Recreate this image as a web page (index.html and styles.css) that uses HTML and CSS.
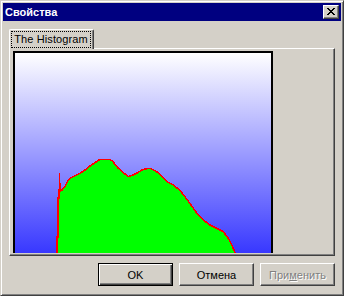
FILE: index.html
```html
<!DOCTYPE html>
<html>
<head>
<meta charset="utf-8">
<link rel="stylesheet" href="styles.css">
</head>
<body>
<div class="window">
  <div class="titlebar">
    <span class="title">Свойства</span>
    <button class="close" aria-label="Закрыть">
      <svg width="8" height="7" viewBox="0 0 8 7" shape-rendering="crispEdges">
        <path d="M0 0h2v1H0zM6 0h2v1H6zM1 1h2v1H1zM5 1h2v1H5zM2 2h4v1H2zM3 3h2v1H3zM2 4h4v1H2zM1 5h2v1H1zM5 5h2v1H5zM0 6h2v1H0zM6 6h2v1H6z" fill="#000"/>
      </svg>
    </button>
  </div>
  <div class="content">
    <div class="tabs">
      <div class="tab"><span class="focus">The Histogram</span></div>
    </div>
    <div class="panel">
      <div class="histo">
        <svg class="chart" width="256" height="200" viewBox="15 53 256 200" shape-rendering="crispEdges">
          <polygon fill="#00ff00" points="57,253 57,237 58,237 58,198 59,198 59,190 62,190 65,186.7 68.3,180 71.7,177.3 76.7,175 80,173.3 85,170 90,166 95,162.7 100,159.3 110,159.3 113,161.7 118.3,168.3 123.3,172.7 128.3,176.7 133.3,175 138.3,172.3 143.3,169.3 150,168.3 156.7,171.7 161.7,176 166.7,181.7 173.3,185 180,190.5 186.7,199 193.3,208.3 198.3,215 203.3,220 210,225 216.7,228.3 223.3,231.7 228.3,238.3 231.7,245 235,252.3 236,253"/>
          <polyline fill="none" stroke="#ff0000" stroke-width="1.5" points="57,253 57,237 58,237 58,198 59,198 59,190 62,190 65,186.7 68.3,180 71.7,177.3 76.7,175 80,173.3 85,170 90,166 95,162.7 100,159.3 110,159.3 113,161.7 118.3,168.3 123.3,172.7 128.3,176.7 133.3,175 138.3,172.3 143.3,169.3 150,168.3 156.7,171.7 161.7,176 166.7,181.7 173.3,185 180,190.5 186.7,199 193.3,208.3 198.3,215 203.3,220 210,225 216.7,228.3 223.3,231.7 228.3,238.3 231.7,245 235,252.3 236,253"/>
          <rect x="59" y="173" width="1" height="26" fill="#ff0000"/>
          <rect x="60" y="183" width="1" height="9" fill="#ff0000"/>
        </svg>
      </div>
    </div>
    <div class="buttons">
      <button class="btn default">OK</button>
      <button class="btn">Отмена</button>
      <button class="btn disabled">При<u>м</u>енить</button>
    </div>
  </div>
</div>
</body>
</html>
```

FILE: styles.css
```css
html, body {
  margin: 0;
  padding: 0;
  background: #d4d0c8;
}

body {
  font-family: "Liberation Sans", Arial, sans-serif;
  font-size: 11px;
  color: #000;
}

.window {
  width: 344px;
  height: 296px;
  box-sizing: border-box;
  border: 1px solid;
  border-color: #d4d0c8 #404040 #404040 #d4d0c8;
  box-shadow: inset 1px 1px #ffffff, inset -1px -1px #808080;
  padding: 2px;
  background: #d4d0c8;
  display: flex;
  flex-direction: column;
}

.titlebar {
  height: 18px;
  background: #000080;
  display: flex;
  align-items: center;
  justify-content: space-between;
  padding: 0 2px 0 2px;
}

.title {
  color: #fff;
  font-weight: bold;
  font-size: 11px;
  line-height: 18px;
}

.close {
  width: 16px;
  height: 14px;
  box-sizing: border-box;
  padding: 0 0 0 3px;
  margin: 0;
  background: #d4d0c8;
  border: 1px solid;
  border-color: #ffffff #404040 #404040 #ffffff;
  box-shadow: inset -1px -1px #808080;
  display: flex;
  align-items: center;
  justify-content: flex-start;
}

.close svg {
  display: block;
  margin-top: -1px;
}

.content {
  padding: 8px 6px 0 6px;
  display: flex;
  flex-direction: column;
}

.tabs {
  display: flex;
  height: 20px;
  margin-bottom: -1px;
  position: relative;
  z-index: 1;
}

.tab {
  width: 85px;
  height: 20px;
  box-sizing: border-box;
  background: #d4d0c8;
  border-left: 1px solid #ffffff;
  border-top: 1px solid #ffffff;
  border-right: 1px solid #404040;
  border-radius: 2px 2px 0 0;
  box-shadow: inset -1px 0 #808080;
  padding: 1px 2px 0 1px;
}

.focus {
  display: block;
  height: 17px;
  box-sizing: border-box;
  border: 1px dotted #000;
  text-align: center;
  line-height: 15px;
  font-size: 11px;
  white-space: nowrap;
  letter-spacing: 0.1px;
}

.panel {
  width: 326px;
  height: 208px;
  box-sizing: border-box;
  border: 1px solid;
  border-color: #ffffff #404040 #404040 #ffffff;
  box-shadow: inset -1px -1px #808080;
  padding: 2px 0 0 3px;
}

.histo {
  width: 260px;
  height: 202px;
  box-sizing: border-box;
  border: 2px solid #000;
  border-bottom: none;
  background: linear-gradient(#ffffff, #3838ff);
}

.chart {
  display: block;
}

.buttons {
  display: flex;
  justify-content: flex-end;
  gap: 6px;
  margin-top: 7px;
}

.btn {
  width: 75px;
  height: 23px;
  box-sizing: border-box;
  margin: 0;
  padding: 0;
  font-family: "Liberation Sans", Arial, sans-serif;
  font-size: 11px;
  color: #000;
  background: #d4d0c8;
  border: 1px solid;
  border-color: #ffffff #404040 #404040 #ffffff;
  box-shadow: inset -1px -1px #808080;
  white-space: nowrap;
}

.btn.default {
  border: 1px solid #000;
  box-shadow: inset 1px 1px #ffffff, inset -1px -1px #404040, inset -2px -2px #808080;
}

.btn.disabled {
  color: #808080;
  text-shadow: 1px 1px #ffffff;
}

.btn.disabled u {
  text-decoration-color: #808080;
}
```
